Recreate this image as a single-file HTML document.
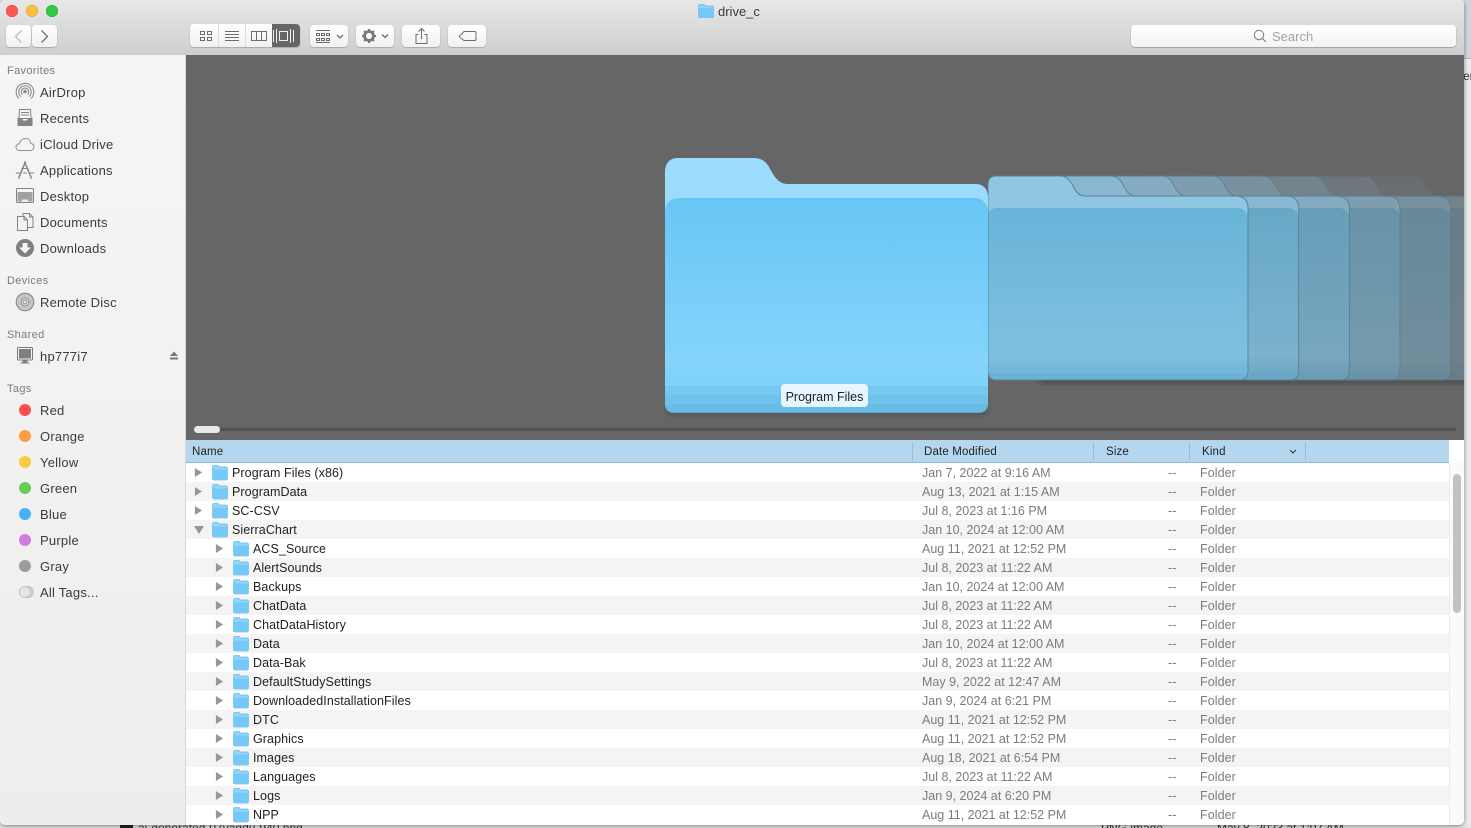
<!DOCTYPE html>
<html><head><meta charset="utf-8"><title>drive_c</title>
<style>
html,body{margin:0;padding:0;width:1471px;height:828px;overflow:hidden;background:#e9e9e9;font-family:"Liberation Sans",sans-serif;}
.abs,.abs *{box-sizing:border-box}
.abs{position:absolute}
#win{position:absolute;left:0;top:0;width:1464px;height:825px;overflow:hidden;border-radius:5px;box-shadow:0 1px 4px rgba(0,0,0,.45);background:#fff}
#bar{position:absolute;left:0;top:0;width:1464px;height:55px;background:linear-gradient(#e9e8e9,#cfcecf);border-bottom:1px solid #aeaeae}
.dot{position:absolute;top:5px;width:12px;height:12px;border-radius:50%}
.btn{position:absolute;top:25px;height:22px;background:linear-gradient(#fff,#f1f1f1);border-radius:4px;box-shadow:0 .5px 1px rgba(0,0,0,.35)}
#side{position:absolute;left:0;top:55px;width:185px;height:770px;background:linear-gradient(#f4f5f6,#efedeb);border-right:1px solid #d8d8d8}
.sh{position:absolute;left:7px;font-size:11px;color:#7b7b7d;line-height:14px;letter-spacing:.35px}
.si{position:absolute;left:40px;font-size:13px;color:#3b3b3d;line-height:16px;white-space:nowrap;letter-spacing:.22px}
.ic{position:absolute;left:15px;width:20px;height:20px;overflow:visible}
.tg{position:absolute;left:19px;width:12px;height:12px;border-radius:50%}
#cover{position:absolute;left:186px;top:55px;width:1278px;height:385px;background:#666;overflow:hidden}
#hdr{position:absolute;left:186px;top:440px;width:1263px;height:22px;background:#b4d7ef;border-bottom:1px solid #8fb4d0;box-sizing:content-box;font-size:11.5px;letter-spacing:.15px;color:#222;line-height:22px}
#hdr span{position:absolute;top:0}
#hdr i{position:absolute;top:2px;width:1px;height:18px;background:#98bcd6}
.r{position:absolute;left:186px;width:1263px;height:19px;font-size:12.5px;line-height:19px;color:#222;white-space:nowrap}
.g::before{content:"";position:absolute;left:0;top:-1px;width:1263px;height:19px;background:#f4f4f4}
.r b{position:absolute;top:0;font-weight:normal;letter-spacing:.08px}
.r .d{left:736px;color:#7c7c7c;letter-spacing:0}
.r .s{left:982px;color:#7c7c7c}
.r .k{left:1014px;color:#7c7c7c}
.r svg{position:absolute;overflow:visible}
</style></head>
<body>
<svg width="0" height="0" style="position:absolute">
<defs>
<symbol id="f" viewBox="0 0 16 14" preserveAspectRatio="none" overflow="visible">
<path d="M.5 2.200C.5 1 1.100.5 2 .5h3.600c.7 0 1 .3 1.400.9l.3.5h6.600c.9 0 1.600.6 1.600 1.600v9c0 1-.6 1.500-1.500 1.500H2c-.9 0-1.500-.5-1.500-1.500z" fill="#8ed6fa" stroke="#6bbbe4" stroke-width=".7"/>
<path d="M.8 4.300h14.400v8.700c0 .6-.4 1-1 1H1.800c-.6 0-1-.4-1-1z" fill="#74c9f8"/>
</symbol>
<symbol id="a" viewBox="0 0 10 10" overflow="visible"><path d="M1 0l8 5-8 5z" fill="#979797"/></symbol>
<linearGradient id="fr" x1="0" y1="0" x2="0" y2="1"><stop offset="0" stop-color="#68c6f5"/><stop offset=".75" stop-color="#84d4fb"/><stop offset="1" stop-color="#7acff8"/></linearGradient>
<linearGradient id="bk" x1="0" y1="0" x2="0" y2="1"><stop offset="0" stop-color="#9ddcff"/><stop offset="1" stop-color="#94d6f8"/></linearGradient>
<linearGradient id="fr2" x1="0" y1="0" x2="0" y2="1"><stop offset="0" stop-color="#68b4d9"/><stop offset=".85" stop-color="#7fc0e0"/><stop offset="1" stop-color="#7cbdde"/></linearGradient>
<path id="sback" d="M0 9C0 3 3 0 8 0H72C78 0 81 3 84 8C87 14 90 20 97 20H248C256 20 260 25 260 32V195C260 201 257 204 251 204H8C3 204 0 201 0 195Z"/>
<path id="sfront" d="M0 42C0 36 3 32 9 32H249C256 32 260 37 260 44V195C260 201 257 204 251 204H8C3 204 0 201 0 195Z"/>
<path id="sband" d="M0 197H260C260 201 257 204 251 204H8C3 204 0 201 0 197Z"/>
<g id="stk">
<use href="#sback" fill="#90c6e2"/>
<use href="#sfront" fill="url(#fr2)"/>
<rect x="0" y="183" width="260" height="6" fill="#7bbcdd"/>
<rect x="0" y="189" width="260" height="8" fill="#74b7da"/>
<use href="#sband" fill="#6cb2d6"/>
<use href="#sback" fill="none" stroke="#56849c" stroke-width="1"/>
</g>
</defs>
</svg>

<!-- behind window -->
<div class="abs" style="left:1464px;top:0;width:7px;height:828px;background:#ececec"></div>
<div class="abs" style="left:1464px;top:0;width:7px;height:58px;background:#cfd6db"></div>
<div class="abs" style="left:1464px;top:58px;width:7px;height:1px;background:#b5b5b5"></div>
<div class="abs" style="left:1464px;top:69px;font-size:12px;color:#333;line-height:14px;width:7px;overflow:hidden"><span style="margin-left:-1px">er</span></div>
<div class="abs" style="left:0;top:825px;width:1471px;height:3px;background:#e4e4e4;overflow:hidden;font-size:12px;color:#333;line-height:14px">
<span class="abs" style="left:120px;top:-1px;width:13px;height:4px;background:#222"></span>
<span class="abs" style="left:138px;top:-4px;white-space:nowrap">ai-generated-07vagdu-940.png</span>
<span class="abs" style="left:1101px;top:-4px;white-space:nowrap">PNG image</span>
<span class="abs" style="left:1217px;top:-4px;white-space:nowrap">May 8, 2023 at 1:07 AM</span>
</div>

<div id="win">
<div id="bar">
<div class="dot" style="left:6px;background:#fc5753;box-shadow:inset 0 0 0 .5px #df3e3a"></div>
<div class="dot" style="left:26px;background:#fdbc40;box-shadow:inset 0 0 0 .5px #de9f34"></div>
<div class="dot" style="left:46px;background:#33c748;box-shadow:inset 0 0 0 .5px #27aa35"></div>
<svg class="abs" style="left:698px;top:4px" width="16" height="14"><use href="#f" width="16" height="14"/></svg>
<div class="abs" style="left:718px;top:4px;font-size:13px;line-height:16px;color:#3a3a3a">drive_c</div>

<div class="btn" style="left:6px;width:25px"><svg class="abs" style="left:0;top:0" width="25" height="22"><path d="M15.500 5.500L9.500 11.500l6 6" fill="none" stroke="#bdbdbd" stroke-width="1.300"/></svg></div>
<div class="btn" style="left:32px;width:25px"><svg class="abs" style="left:0;top:0" width="25" height="22"><path d="M9.500 5.500l6 6-6 6" fill="none" stroke="#6f6f6f" stroke-width="1.300"/></svg></div>

<div class="btn" style="left:190px;width:110px;top:24px;height:23px;overflow:hidden">
<div class="abs" style="left:82px;top:0;width:28px;height:23px;background:#666"></div>
<div class="abs" style="left:28px;top:0;width:1px;height:23px;background:#dcdcdc"></div>
<div class="abs" style="left:55px;top:0;width:1px;height:23px;background:#dcdcdc"></div>
<svg class="abs" style="left:0;top:0" width="110" height="23" fill="none" stroke="#6d6d6d">
<g stroke-width="1"><rect x="10.500" y="7.500" width="4" height="3"/><rect x="17.500" y="7.500" width="4" height="3"/><rect x="10.500" y="13.500" width="4" height="3"/><rect x="17.500" y="13.500" width="4" height="3"/></g>
<path d="M35 7.500h14M35 10.500h14M35 13.500h14M35 16.500h14" stroke-width="1"/>
<path d="M61.500 7.500h15v9h-15zM66.500 7.500v9M71.500 7.500v9" stroke-width="1"/>
<g stroke="#f2f2f2" stroke-width="1"><rect x="89.500" y="7.500" width="8" height="9"/><path d="M86.500 5v14M83.500 6v12M100.500 5v14M103.500 6v12"/></g>
</svg>
</div>

<div class="btn" style="left:310px;width:38px"><svg class="abs" style="left:0;top:0" width="38" height="22" fill="none" stroke="#6d6d6d">
<path d="M6 5.500h14M6 17.500h14" stroke-width="1"/>
<g stroke-width="1"><rect x="6.500" y="8.500" width="3" height="2"/><rect x="11.500" y="8.500" width="3" height="2"/><rect x="16.500" y="8.500" width="3" height="2"/><rect x="6.500" y="13.500" width="3" height="2"/><rect x="11.500" y="13.500" width="3" height="2"/><rect x="16.500" y="13.500" width="3" height="2"/></g>
<path d="M27 10l3 3 3-3" stroke-width="1.300"/></svg></div>

<div class="btn" style="left:356px;width:38px"><svg class="abs" style="left:0;top:0" width="38" height="22">
<circle cx="13" cy="11" r="4.500" fill="none" stroke="#777" stroke-width="2.800"/>
<path d="M13 4v2.500M13 15.500V18M6 11h2.500M17.500 11H20M8 6l1.800 1.800M16.200 14.200L18 16M18 6l-1.800 1.800M9.800 14.200L8 16" stroke="#777" stroke-width="2"/>
<path d="M26 9.500l3 3 3-3" fill="none" stroke="#6d6d6d" stroke-width="1.300"/></svg></div>

<div class="btn" style="left:402px;width:38px"><svg class="abs" style="left:0;top:0" width="38" height="22" fill="none" stroke="#6d6d6d" stroke-width="1">
<path d="M16.500 9.500h-2.500v9h11v-9h-2.500M19.500 14V4M16.500 6.500l3-3 3 3"/></svg></div>

<div class="btn" style="left:448px;width:38px"><svg class="abs" style="left:0;top:0" width="38" height="22" fill="none" stroke="#6d6d6d" stroke-width="1">
<path d="M16 6.500h10.500c1 0 1.500.5 1.500 1.500v6c0 1-.5 1.500-1.500 1.500H16l-4-3c-1-.8-1-1.200 0-2z"/></svg></div>

<div class="abs" style="left:1131px;top:25px;width:325px;height:22px;background:linear-gradient(#fff,#f3f3f3);border-radius:4px;box-shadow:0 .5px 1px rgba(0,0,0,.4)"></div>
<svg class="abs" style="left:1253px;top:29px" width="14" height="14" fill="none" stroke="#777" stroke-width="1"><circle cx="6" cy="6" r="4.700"/><path d="M9.500 9.500l3.500 3.500"/></svg>
<div class="abs" style="left:1272px;top:29px;font-size:13px;line-height:16px;color:#a3a3a3">Search</div>
</div>

<div id="side">
<div class="sh" style="top:9px">Favorites</div>
<svg class="ic" style="top:27px" viewBox="0 0 20 20" fill="none" stroke="#8a8a8a"><path d="M4 16.500a8.800 8.800 0 1 1 12 0" stroke-width="1.100"/><path d="M5.800 14.500a6.200 6.200 0 1 1 8.400 0" stroke-width="1.100"/><path d="M7.500 12.500a3.700 3.700 0 1 1 5 0" stroke-width="1.100"/><circle cx="10" cy="9.500" r="1.300" fill="#8a8a8a"/></svg>
<div class="si" style="top:30px">AirDrop</div>
<svg class="ic" style="top:53px" viewBox="0 0 20 20"><path d="M4.500 1.500h11l.5 9H4z" fill="#f4f4f4" stroke="#848484"/><path d="M6 4.500h8M6 7h8" stroke="#848484"/><path d="M2.500 10h4.500l1 2.500h4l1-2.500h4.500v7c0 .7-.5 1-1 1H3.500c-.5 0-1-.3-1-1z" fill="#848484"/></svg>
<div class="si" style="top:56px">Recents</div>
<svg class="ic" style="top:79px" viewBox="0 0 20 20"><path d="M5 16.500c-2.500 0-4-1.500-4-3.500 0-2 1.500-3.300 3.300-3.300C5 6.500 8 4.500 10.500 4.500c3 0 5 2 5.300 5 1.800.1 3.200 1.500 3.200 3.400 0 2-1.500 3.600-3.500 3.600z" fill="none" stroke="#909090"/></svg>
<div class="si" style="top:82px">iCloud Drive</div>
<svg class="ic" style="top:105px" viewBox="0 0 20 20" fill="none" stroke="#848484"><path d="M10.500 1.500L3.500 18.500M9.500 1.500l7 17" stroke-width="1.500"/><path d="M.8 13h4.500M8 13h4M14.700 13h4.500" stroke-width="1.100"/><path d="M6.500 8.500h7" stroke-width="1"/></svg>
<div class="si" style="top:108px">Applications</div>
<svg class="ic" style="top:131px" viewBox="0 0 20 20"><rect x="1.500" y="2.500" width="17" height="14" rx="1" fill="#f4f4f4" stroke="#848484"/><path d="M2.500 6h15v9.500h-15z" fill="#a2a2a2"/><path d="M7 13.500h6v2H7z" fill="#ececec"/></svg>
<div class="si" style="top:134px">Desktop</div>
<svg class="ic" style="top:157px" viewBox="0 0 20 20"><path d="M8 1.500h6.500l3.500 3.500v10.500H8z" fill="#f2f2f2" stroke="#848484"/><path d="M2.500 4.500h6.500l3.500 3.500v10.500h-10z" fill="#f2f2f2" stroke="#848484"/><path d="M9 4.500V8h3.500M14.500 1.500V5H18" fill="none" stroke="#848484"/></svg>
<div class="si" style="top:160px">Documents</div>
<svg class="ic" style="top:183px" viewBox="0 0 20 20"><circle cx="10" cy="10" r="9" fill="#7f7f7f"/><path d="M7.500 5h5v4.500H16L10 15.500 4 9.500h3.500z" fill="#f4f4f4"/></svg>
<div class="si" style="top:186px">Downloads</div>

<div class="sh" style="top:219px">Devices</div>
<svg class="ic" style="top:237px" viewBox="0 0 20 20"><circle cx="10" cy="10" r="8.800" fill="#c6c6c6" stroke="#848484"/><circle cx="10" cy="10" r="4" fill="#d6d6d6" stroke="#959595"/><circle cx="10" cy="10" r="1.800" fill="#eee" stroke="#959595"/></svg>
<div class="si" style="top:240px">Remote Disc</div>

<div class="sh" style="top:273px">Shared</div>
<svg class="ic" style="top:291px" viewBox="0 0 20 20"><rect x="2.500" y="1.500" width="15" height="12.500" rx="1" fill="#f2f2f2" stroke="#7a7a7a"/><rect x="4" y="3" width="12" height="9.500" fill="#7f7f7f"/><path d="M7.500 14.500h5v2h2v1h-9v-1h2z" fill="#7f7f7f"/></svg>
<div class="si" style="top:294px">hp777i7</div>
<svg class="abs" style="left:169px;top:296px" width="10" height="10"><path d="M5 .5l4 4.500H1z" fill="#767676"/><rect x="1" y="6.500" width="8" height="2" fill="#767676"/></svg>

<div class="sh" style="top:327px">Tags</div>
<div class="tg" style="top:349px;background:#fb5052"></div><div class="si" style="top:348px">Red</div>
<div class="tg" style="top:375px;background:#fb9d41"></div><div class="si" style="top:374px">Orange</div>
<div class="tg" style="top:401px;background:#fbcb47"></div><div class="si" style="top:400px">Yellow</div>
<div class="tg" style="top:427px;background:#67cd54"></div><div class="si" style="top:426px">Green</div>
<div class="tg" style="top:453px;background:#45b1f8"></div><div class="si" style="top:452px">Blue</div>
<div class="tg" style="top:479px;background:#cd7ee0"></div><div class="si" style="top:478px">Purple</div>
<div class="tg" style="top:505px;background:#9c9c9e"></div><div class="si" style="top:504px">Gray</div>
<svg class="ic" style="top:527px" viewBox="0 0 20 20"><circle cx="13" cy="10" r="5.500" fill="#ececec" stroke="#c4c4c4"/><circle cx="11.500" cy="10" r="5.500" fill="#ececec" stroke="#c4c4c4"/><circle cx="10" cy="10" r="5.500" fill="#e5e5e5" stroke="#c4c4c4"/></svg>
<div class="si" style="top:530px">All Tags...</div>
</div>

<div id="cover">
<svg width="1278" height="385" viewBox="186 55 1278 385" style="position:absolute;left:0;top:0">
<defs><filter id="bl" x="-10%" y="-10%" width="120%" height="130%"><feGaussianBlur stdDeviation="3"/></filter></defs>
<rect x="1040" y="376" width="430" height="8" fill="#333" opacity=".45" filter="url(#bl)"/>
<use href="#sback" fill="#666" transform="translate(1342.900 176)"/><use href="#stk" transform="translate(1342.900 176)" opacity=".08"/>
<use href="#sback" fill="#666" transform="translate(1292.200 176)"/><use href="#stk" transform="translate(1292.200 176)" opacity=".18"/>
<use href="#sback" fill="#666" transform="translate(1241.500 176)"/><use href="#stk" transform="translate(1241.500 176)" opacity=".3"/>
<use href="#sback" fill="#666" transform="translate(1190.800 176)"/><use href="#stk" transform="translate(1190.800 176)" opacity=".45"/>
<use href="#sback" fill="#666" transform="translate(1140.100 176)"/><use href="#stk" transform="translate(1140.100 176)" opacity=".58"/>
<use href="#sback" fill="#666" transform="translate(1089.400 176)"/><use href="#stk" transform="translate(1089.400 176)" opacity=".72"/>
<use href="#sback" fill="#666" transform="translate(1038.700 176)"/><use href="#stk" transform="translate(1038.700 176)" opacity=".85"/>
<use href="#stk" transform="translate(988 176)"/>
<!-- main folder -->
<rect x="668" y="396" width="318" height="18" fill="#333" opacity=".5" filter="url(#bl)"/>
<path d="M665 172C665 163 670 158 678 158H752C760 158 765 160 769 167C774 176 778 184 788 184H976C984 184 988 190 988 198V403C988 410 984 413 977 413H676C669 413 665 410 665 403Z" fill="url(#bk)"/>
<path d="M665 212C665 203 671 198 680 198H974C983 198 988 204 988 212V403C988 410 984 413 977 413H676C669 413 665 410 665 403Z" fill="url(#fr)"/>
<rect x="665" y="386" width="323" height="9" fill="#76c8f0"/>
<rect x="665" y="395" width="323" height="9" fill="#70c2eb"/>
<path d="M665 404H988V403C988 410 984 413 977 413H676C669 413 665 410 665 403Z" fill="#69bce6"/>
<path d="M671 412.500h311" stroke="#5aa6d0" stroke-width="1"/>
<rect x="781" y="384" width="87" height="23" rx="4" fill="#e6f5fe"/>
<text x="824.500" y="401" font-family="Liberation Sans,sans-serif" font-size="12.500" fill="#222" text-anchor="middle">Program Files</text>
<!-- scroll -->
<rect x="194" y="428" width="1262" height="3" fill="#4a4a4a" opacity=".7"/>
<rect x="194" y="426" width="26" height="7" rx="3.500" fill="#e9e9e9"/>
</svg>
</div>

<div id="hdr">
<span style="left:6px;top:1px">Name</span>
<i style="left:726px"></i><span style="left:738px;top:1px">Date Modified</span>
<i style="left:907px"></i><span style="left:920px;top:1px">Size</span>
<i style="left:1003px"></i><span style="left:1016px;top:1px">Kind</span>
<svg class="abs" style="left:1103px;top:9px" width="8" height="6"><path d="M1 1l3 3 3-3" fill="none" stroke="#333" stroke-width="1.100"/></svg>
<i style="left:1119px"></i>
</div>

<div class="r" style="top:464px"><svg style="left:8px;top:4px" width="9" height="9"><use href="#a" width="9" height="9"/></svg><svg style="left:26px;top:1px" width="16" height="15"><use href="#f" width="16" height="15"/></svg><b style="left:46px">Program Files (x86)</b><b class="d">Jan 7, 2022 at 9:16 AM</b><b class="s">--</b><b class="k">Folder</b></div>
<div class="r g" style="top:483px"><svg style="left:8px;top:4px" width="9" height="9"><use href="#a" width="9" height="9"/></svg><svg style="left:26px;top:1px" width="16" height="15"><use href="#f" width="16" height="15"/></svg><b style="left:46px">ProgramData</b><b class="d">Aug 13, 2021 at 1:15 AM</b><b class="s">--</b><b class="k">Folder</b></div>
<div class="r" style="top:502px"><svg style="left:8px;top:4px" width="9" height="9"><use href="#a" width="9" height="9"/></svg><svg style="left:26px;top:1px" width="16" height="15"><use href="#f" width="16" height="15"/></svg><b style="left:46px">SC-CSV</b><b class="d">Jul 8, 2023 at 1:16 PM</b><b class="s">--</b><b class="k">Folder</b></div>
<div class="r g" style="top:521px"><svg style="left:8px;top:4px" width="10" height="9"><path d="M0 1h10L5 9z" fill="#979797"/></svg><svg style="left:26px;top:1px" width="16" height="15"><use href="#f" width="16" height="15"/></svg><b style="left:46px">SierraChart</b><b class="d">Jan 10, 2024 at 12:00 AM</b><b class="s">--</b><b class="k">Folder</b></div>
<div class="r" style="top:540px"><svg style="left:29px;top:4px" width="9" height="9"><use href="#a" width="9" height="9"/></svg><svg style="left:47px;top:1px" width="16" height="15"><use href="#f" width="16" height="15"/></svg><b style="left:67px">ACS_Source</b><b class="d">Aug 11, 2021 at 12:52 PM</b><b class="s">--</b><b class="k">Folder</b></div>
<div class="r g" style="top:559px"><svg style="left:29px;top:4px" width="9" height="9"><use href="#a" width="9" height="9"/></svg><svg style="left:47px;top:1px" width="16" height="15"><use href="#f" width="16" height="15"/></svg><b style="left:67px">AlertSounds</b><b class="d">Jul 8, 2023 at 11:22 AM</b><b class="s">--</b><b class="k">Folder</b></div>
<div class="r" style="top:578px"><svg style="left:29px;top:4px" width="9" height="9"><use href="#a" width="9" height="9"/></svg><svg style="left:47px;top:1px" width="16" height="15"><use href="#f" width="16" height="15"/></svg><b style="left:67px">Backups</b><b class="d">Jan 10, 2024 at 12:00 AM</b><b class="s">--</b><b class="k">Folder</b></div>
<div class="r g" style="top:597px"><svg style="left:29px;top:4px" width="9" height="9"><use href="#a" width="9" height="9"/></svg><svg style="left:47px;top:1px" width="16" height="15"><use href="#f" width="16" height="15"/></svg><b style="left:67px">ChatData</b><b class="d">Jul 8, 2023 at 11:22 AM</b><b class="s">--</b><b class="k">Folder</b></div>
<div class="r" style="top:616px"><svg style="left:29px;top:4px" width="9" height="9"><use href="#a" width="9" height="9"/></svg><svg style="left:47px;top:1px" width="16" height="15"><use href="#f" width="16" height="15"/></svg><b style="left:67px">ChatDataHistory</b><b class="d">Jul 8, 2023 at 11:22 AM</b><b class="s">--</b><b class="k">Folder</b></div>
<div class="r g" style="top:635px"><svg style="left:29px;top:4px" width="9" height="9"><use href="#a" width="9" height="9"/></svg><svg style="left:47px;top:1px" width="16" height="15"><use href="#f" width="16" height="15"/></svg><b style="left:67px">Data</b><b class="d">Jan 10, 2024 at 12:00 AM</b><b class="s">--</b><b class="k">Folder</b></div>
<div class="r" style="top:654px"><svg style="left:29px;top:4px" width="9" height="9"><use href="#a" width="9" height="9"/></svg><svg style="left:47px;top:1px" width="16" height="15"><use href="#f" width="16" height="15"/></svg><b style="left:67px">Data-Bak</b><b class="d">Jul 8, 2023 at 11:22 AM</b><b class="s">--</b><b class="k">Folder</b></div>
<div class="r g" style="top:673px"><svg style="left:29px;top:4px" width="9" height="9"><use href="#a" width="9" height="9"/></svg><svg style="left:47px;top:1px" width="16" height="15"><use href="#f" width="16" height="15"/></svg><b style="left:67px">DefaultStudySettings</b><b class="d">May 9, 2022 at 12:47 AM</b><b class="s">--</b><b class="k">Folder</b></div>
<div class="r" style="top:692px"><svg style="left:29px;top:4px" width="9" height="9"><use href="#a" width="9" height="9"/></svg><svg style="left:47px;top:1px" width="16" height="15"><use href="#f" width="16" height="15"/></svg><b style="left:67px">DownloadedInstallationFiles</b><b class="d">Jan 9, 2024 at 6:21 PM</b><b class="s">--</b><b class="k">Folder</b></div>
<div class="r g" style="top:711px"><svg style="left:29px;top:4px" width="9" height="9"><use href="#a" width="9" height="9"/></svg><svg style="left:47px;top:1px" width="16" height="15"><use href="#f" width="16" height="15"/></svg><b style="left:67px">DTC</b><b class="d">Aug 11, 2021 at 12:52 PM</b><b class="s">--</b><b class="k">Folder</b></div>
<div class="r" style="top:730px"><svg style="left:29px;top:4px" width="9" height="9"><use href="#a" width="9" height="9"/></svg><svg style="left:47px;top:1px" width="16" height="15"><use href="#f" width="16" height="15"/></svg><b style="left:67px">Graphics</b><b class="d">Aug 11, 2021 at 12:52 PM</b><b class="s">--</b><b class="k">Folder</b></div>
<div class="r g" style="top:749px"><svg style="left:29px;top:4px" width="9" height="9"><use href="#a" width="9" height="9"/></svg><svg style="left:47px;top:1px" width="16" height="15"><use href="#f" width="16" height="15"/></svg><b style="left:67px">Images</b><b class="d">Aug 18, 2021 at 6:54 PM</b><b class="s">--</b><b class="k">Folder</b></div>
<div class="r" style="top:768px"><svg style="left:29px;top:4px" width="9" height="9"><use href="#a" width="9" height="9"/></svg><svg style="left:47px;top:1px" width="16" height="15"><use href="#f" width="16" height="15"/></svg><b style="left:67px">Languages</b><b class="d">Jul 8, 2023 at 11:22 AM</b><b class="s">--</b><b class="k">Folder</b></div>
<div class="r g" style="top:787px"><svg style="left:29px;top:4px" width="9" height="9"><use href="#a" width="9" height="9"/></svg><svg style="left:47px;top:1px" width="16" height="15"><use href="#f" width="16" height="15"/></svg><b style="left:67px">Logs</b><b class="d">Jan 9, 2024 at 6:20 PM</b><b class="s">--</b><b class="k">Folder</b></div>
<div class="r" style="top:806px"><svg style="left:29px;top:4px" width="9" height="9"><use href="#a" width="9" height="9"/></svg><svg style="left:47px;top:1px" width="16" height="15"><use href="#f" width="16" height="15"/></svg><b style="left:67px">NPP</b><b class="d">Aug 11, 2021 at 12:52 PM</b><b class="s">--</b><b class="k">Folder</b></div>

<div class="abs" style="left:1449px;top:463px;width:15px;height:362px;background:#fafafa;border-left:1px solid #ededed"></div>
<div class="abs" style="left:1453px;top:474px;width:8px;height:139px;border-radius:4px;background:#c2c2c2"></div>
<div class="abs" style="left:1449px;top:440px;width:15px;height:23px;background:#fff"></div>
</div>
</body></html>
